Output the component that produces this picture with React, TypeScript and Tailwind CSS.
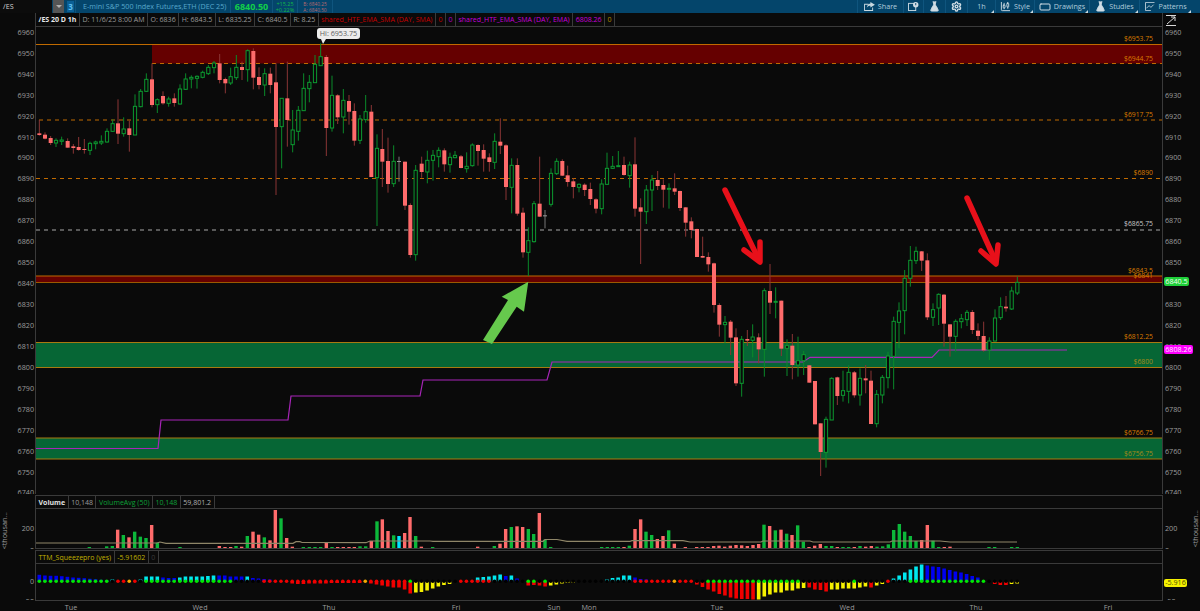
import { FlaskConical, Settings, RectangleHorizontal, CandlestickChart } from "lucide-react";

type Candle = [number, number, number, number, number, number];

// candles as [x, wickTop, bodyTop, bodyBottom, wickBottom, kind], kind 1 up, 0 down, 2 flat
// each block is traced at 3x, so x = offsetX + v/3 and y = offsetY + v/3
const candleBlocks: { ox: number; oy: number; rows: Candle[] }[] = [
  {
    ox: 0,
    oy: 30,
    rows: [
      [118, 270, 310, 315, 317, 0], [135, 307, 314, 326, 328, 0], [152, 318, 324, 339, 345, 0], [168, 325, 331, 339, 351, 1],
      [185, 320, 330, 334, 345, 1], [203, 325, 333, 353, 353, 0], [220, 342, 349, 354, 371, 0], [236, 321, 351, 360, 362, 0],
      [253, 327, 357, 360, 371, 0], [270, 335, 340, 361, 375, 1], [287, 332, 336, 341, 358, 1], [304, 316, 334, 339, 345, 1],
      [321, 295, 304, 336, 338, 1], [338, 268, 281, 304, 306, 1], [354, 208, 280, 311, 342, 0], [371, 262, 297, 311, 320, 1],
      [388, 272, 295, 315, 365, 0], [405, 193, 229, 315, 315, 1], [422, 177, 184, 230, 232, 1], [439, 130, 148, 184, 186, 1],
      [456, 100, 148, 225, 232, 0], [472, 205, 209, 224, 249, 1], [489, 184, 198, 220, 224, 0], [506, 200, 207, 220, 230, 1],
      [523, 190, 205, 219, 230, 0], [540, 163, 177, 222, 224, 1], [557, 130, 147, 178, 180, 1], [574, 136, 142, 147, 175, 1],
      [591, 136, 139, 145, 176, 1], [608, 122, 127, 142, 145, 1], [625, 105, 112, 131, 135, 1], [642, 93, 99, 113, 130, 1],
      [659, 72, 100, 150, 160, 0], [676, 143, 147, 160, 190, 0], [692, 113, 140, 159, 165, 1], [709, 75, 112, 143, 150, 1],
      [726, 95, 111, 120, 150, 0], [743, 58, 62, 119, 155, 1], [760, 55, 63, 143, 178, 0], [777, 112, 141, 165, 178, 0],
      [794, 115, 131, 165, 198, 1], [811, 113, 131, 165, 190, 0], [828, 100, 157, 291, 495, 0], [845, 205, 205, 290, 415, 1],
      [862, 95, 205, 270, 350, 0], [878, 240, 300, 344, 367, 1], [895, 228, 241, 304, 332, 1], [911, 130, 175, 242, 243, 1],
      [928, 135, 157, 176, 217, 1], [945, 75, 103, 158, 158, 1], [962, 40, 80, 107, 107, 1], [979, 75, 81, 294, 378, 0],
      [996, 137, 196, 294, 305, 1], [1013, 193, 196, 262, 282, 0], [1030, 177, 211, 261, 310, 1], [1047, 195, 213, 245, 284, 0],
      [1063, 220, 243, 332, 347, 0], [1080, 255, 267, 331, 342, 1], [1097, 195, 245, 269, 278, 1], [1114, 225, 245, 441, 441, 0],
      [1131, 313, 355, 443, 588, 1], [1147, 297, 357, 395, 471, 0], [1164, 323, 393, 462, 488, 0], [1181, 346, 394, 461, 471, 1],
      [1197, 380, 393, 396, 455, 2],
    ],
  },
  {
    ox: 400,
    oy: 110,
    rows: [
      [15, 155, 155, 287, 300, 0], [31, 280, 285, 435, 443, 0], [47, 165, 181, 434, 452, 1], [65, 140, 161, 186, 203, 0],
      [82, 122, 151, 186, 220, 1], [99, 120, 136, 151, 212, 1], [116, 112, 121, 140, 172, 1], [133, 115, 121, 163, 185, 0],
      [150, 128, 142, 164, 188, 1], [165, 123, 136, 143, 145, 1], [183, 135, 139, 174, 175, 0], [200, 127, 169, 176, 188, 1],
      [217, 100, 105, 167, 170, 1], [234, 103, 105, 123, 167, 0], [251, 103, 120, 146, 185, 0], [268, 130, 142, 156, 185, 0],
      [284, 70, 94, 157, 177, 1], [301, 25, 95, 107, 132, 0], [318, 103, 106, 231, 270, 0], [335, 145, 166, 232, 310, 1],
      [352, 145, 165, 311, 317, 0], [369, 293, 308, 427, 443, 0], [385, 352, 392, 427, 498, 1], [402, 273, 281, 395, 398, 1],
      [419, 140, 281, 320, 320, 0], [435, 300, 316, 319, 355, 2], [453, 175, 190, 283, 290, 1], [470, 145, 154, 191, 195, 1],
      [487, 148, 153, 197, 198, 0], [503, 167, 196, 216, 230, 0], [520, 205, 214, 231, 265, 0], [537, 220, 223, 232, 247, 1],
      [554, 220, 224, 240, 258, 0], [571, 218, 237, 267, 285, 0], [588, 265, 268, 296, 310, 0], [605, 208, 222, 296, 313, 1],
      [621, 128, 175, 223, 225, 1], [638, 138, 169, 175, 177, 1], [655, 123, 167, 170, 170, 1], [672, 140, 165, 195, 197, 0],
      [689, 155, 165, 197, 233, 1], [705, 82, 163, 296, 320, 0], [722, 265, 292, 305, 462, 0], [739, 225, 240, 305, 342, 1],
      [756, 195, 210, 240, 303, 1], [773, 183, 210, 228, 240, 0], [790, 208, 225, 239, 293, 0], [807, 220, 235, 238, 296, 1],
      [824, 190, 235, 245, 255, 0], [840, 242, 243, 294, 303, 0], [857, 292, 292, 338, 380, 0], [874, 322, 334, 360, 385, 0],
      [891, 356, 357, 441, 441, 0], [908, 380, 438, 443, 443, 0], [925, 427, 441, 463, 485, 0],
    ],
  },
  {
    ox: 700,
    oy: 240,
    rows: [
      [42, 68, 70, 195, 218, 0], [58, 190, 195, 254, 290, 0], [75, 228, 247, 254, 310, 1], [92, 240, 245, 293, 345, 0],
      [108, 265, 292, 430, 438, 0], [125, 288, 298, 430, 470, 1], [142, 270, 297, 302, 318, 0], [158, 253, 291, 301, 352, 1],
      [176, 280, 292, 328, 370, 0], [193, 145, 152, 328, 410, 1], [210, 72, 153, 188, 222, 0], [227, 142, 184, 187, 235, 1],
      [244, 182, 182, 326, 348, 0], [261, 298, 317, 325, 408, 1], [277, 282, 317, 375, 418, 0], [294, 290, 362, 375, 410, 1],
      [311, 333, 344, 362, 405, 1], [328, 375, 376, 428, 428, 0], [345, 423, 423, 553, 553, 0], [362, 550, 550, 636, 708, 0],
      [378, 530, 538, 637, 683, 1], [395, 412, 415, 540, 540, 1], [412, 410, 412, 468, 495, 0], [429, 392, 452, 466, 485, 1],
      [446, 376, 397, 454, 490, 1], [463, 393, 397, 466, 473, 0], [480, 385, 415, 465, 497, 1], [497, 375, 415, 421, 460, 0],
      [513, 392, 422, 552, 552, 0], [530, 450, 463, 551, 562, 1], [547, 405, 412, 465, 490, 1], [564, 335, 348, 413, 445, 1],
      [581, 230, 244, 349, 448, 1], [597, 187, 213, 247, 325, 1], [614, 90, 115, 212, 283, 1], [631, 18, 61, 115, 140, 1],
      [648, 20, 34, 62, 72, 1], [665, 33, 34, 62, 93, 0], [682, 40, 61, 232, 240, 0], [699, 190, 209, 232, 258, 1],
      [716, 160, 163, 204, 255, 1], [732, 162, 164, 251, 320, 0], [750, 253, 253, 290, 350, 0], [767, 238, 244, 289, 335, 1],
      [784, 222, 236, 245, 265, 1], [801, 210, 217, 239, 258, 1], [817, 210, 216, 270, 282, 0], [834, 250, 272, 288, 300, 0],
      [851, 245, 288, 331, 335, 0], [868, 292, 303, 330, 360, 1], [885, 208, 234, 303, 305, 1], [902, 172, 200, 233, 240, 1],
      [918, 168, 200, 205, 215, 0], [935, 140, 153, 207, 210, 1], [952, 110, 127, 159, 165, 1],
    ],
  },
];

// volume bars as [x, top, g|r], traced at 3x like the candles, baseline y = 548
const volumeBlocks: { ox: number; rows: [number, number, string][] }[] = [
  {
    ox: 0,
    rows: [
      [268, 201, "g"], [320, 199, "g"], [337, 198, "g"], [353, 149, "r"], [370, 165, "g"], [387, 172, "r"], [404, 155, "g"], [421, 170, "g"],
      [438, 174, "g"], [455, 135, "r"], [472, 188, "g"], [540, 201, "g"], [658, 198, "r"], [675, 201, "r"], [692, 201, "r"], [708, 198, "g"],
      [725, 200, "r"], [742, 168, "g"], [759, 155, "r"], [776, 164, "r"], [793, 172, "g"], [810, 181, "r"], [826, 90, "r"], [843, 115, "g"],
      [860, 174, "r"], [877, 200, "r"], [910, 201, "g"], [928, 201, "g"], [945, 201, "g"], [962, 201, "g"], [979, 188, "r"], [996, 201, "g"],
      [1013, 201, "r"], [1030, 201, "r"], [1047, 201, "r"], [1063, 201, "r"], [1080, 199, "g"], [1097, 199, "g"], [1114, 183, "r"], [1131, 124, "g"],
      [1147, 118, "r"], [1164, 153, "r"], [1181, 166, "g"], [1197, 168, "c"],
    ],
  },
  {
    ox: 400,
    rows: [
      [14, 159, "r"], [30, 111, "r"], [47, 168, "g"], [64, 200, "r"], [98, 201, "g"], [233, 200, "r"], [283, 198, "g"], [300, 191, "r"],
      [317, 147, "r"], [334, 141, "g"], [351, 139, "r"], [368, 141, "r"], [385, 147, "g"], [401, 162, "g"], [418, 99, "r"], [435, 179, "g"],
      [452, 201, "g"], [605, 201, "g"], [622, 201, "g"], [638, 201, "g"], [655, 201, "g"], [672, 201, "r"], [688, 197, "g"], [705, 147, "r"],
      [722, 118, "r"], [738, 155, "g"], [755, 165, "g"], [772, 177, "r"], [789, 168, "r"], [806, 151, "g"], [823, 191, "r"], [856, 201, "r"],
      [890, 201, "r"], [907, 201, "r"], [924, 201, "r"], [941, 198, "r"], [957, 197, "r"], [974, 200, "r"], [991, 197, "r"], [1008, 195, "r"],
      [1025, 196, "r"], [1042, 198, "r"], [1059, 195, "r"], [1076, 192, "r"], [1092, 134, "g"], [1109, 138, "r"], [1126, 151, "g"], [1143, 149, "r"],
      [1160, 161, "g"], [1176, 165, "r"], [1193, 136, "g"],
    ],
  },
  {
    ox: 800,
    rows: [
      [10, 185, "g"], [27, 201, "r"], [44, 197, "r"], [61, 192, "r"], [78, 198, "g"], [95, 198, "g"], [112, 201, "r"], [129, 201, "g"],
      [146, 201, "g"], [163, 201, "r"], [180, 198, "g"], [197, 200, "r"], [214, 198, "r"], [231, 200, "g"], [248, 199, "g"], [265, 193, "g"],
      [281, 150, "g"], [298, 132, "g"], [314, 155, "g"], [331, 168, "g"], [348, 183, "g"], [365, 180, "r"], [382, 135, "r"], [399, 182, "g"],
      [416, 201, "g"], [433, 201, "r"], [450, 200, "r"], [567, 201, "g"], [584, 201, "g"], [635, 201, "g"], [652, 201, "g"],
    ],
  },
];

const volumeColors: Record<string, string> = { g: "#0cb83a", r: "#ff6b6b", c: "#00e5ff" };

const volumeAvg =
  "36,543 157,543 160,542 166,543.3 293,543.3 296,541.7 300,541.7 302,542.5 366,542.7 370,541 430,541 433,541.3 543,541.3 545,539.5 557,539.5 567,541.3 630,541.3 632,540.7 683,540.7 690,542 761,542 763,541 810,541 813,542 890,542 892,541 940,541 950,542 1017,542";

// squeeze histogram, one [color, px] per bar, x = 39.3 + 5.62 * i
const b = (h: number): [string, number] => ["#0000f0", h];
const c = (h: number): [string, number] => ["#00e8f0", h];
const r = (h: number): [string, number] => ["#f00000", h];
const y = (h: number): [string, number] => ["#f5f000", h];
const z = (): [string, number] => ["#000000", 0];

const squeeze: [string, number][] = [
  b(6.7), b(6), b(5.7), b(5.7), b(5.3), b(4.7), b(4), b(3.7), b(3.3), b(2.7), b(2.3), b(1.7), b(1.3), c(2), z(), z(), z(), z(),
  c(2), c(5), c(5), c(5), b(4), b(3.5), b(3.5), c(4), c(5), c(5), c(5), c(5), c(5.5), c(6), b(6), b(6), b(5), b(5), b(5), c(5),
  b(3.5), b(3), b(2.5), b(2), z(), z(), z(), r(-2), r(-2.5), r(-2.5), r(-2), r(-2), r(-2), r(-2), r(-1.5), r(-1.5), r(-1.5), r(-1.5),
  r(-1.5), r(-1.5), z(), r(-2), r(-3), r(-4), r(-5), r(-6), r(-6), r(-8), r(-12), y(-11), y(-10.5), y(-9), y(-7), y(-5), y(-3.5), y(-2.5),
  z(), z(), z(), z(), c(4), c(4.5), c(5), c(6), c(7), b(5.5), c(6), b(3), z(), r(-4), r(-3.5), r(-4), r(-5), y(-4), y(-3), y(-2),
  y(-1.5), y(-1), z(), z(), z(), z(), z(), c(2), c(3.5), c(4), c(6), c(6), b(4), b(2.5), b(2), z(), z(), z(), z(), z(), z(), z(), z(),
  r(-3), r(-5.5), r(-8), r(-10), r(-12.5), r(-14), r(-16), r(-17), r(-17.5), r(-17.5), r(-18), y(-18), y(-15), y(-13), y(-11), y(-11), y(-9),
  y(-9), y(-7), y(-6.5), r(-6), r(-8), r(-8.5), r(-10), y(-8), y(-8), y(-7), y(-7), y(-7), y(-6), y(-5), r(-6), y(-4), y(-2.5), z(), c(3),
  c(6), c(9), c(12), c(15), c(17), b(16), b(15), b(14.5), b(13), b(11.5), b(10), b(9), b(7.5), b(5.5), b(4), z(), z(), r(-2.5), r(-3.5),
  r(-3.5), y(-2.5), y(-2),
];

const G = "#00e800";
const R = "#f00000";
const O = "#f5a800";
const K = "#000000";

const repeat = (color: string, n: number) => Array.from({ length: n }, () => color);

const squeezeDots: string[] = [
  ...repeat(G, 13), K, R, R, O, R, K, ...repeat(G, 16), ...repeat(K, 5), ...repeat(R, 18), O, ...repeat(R, 7), G,
  ...repeat(K, 8), ...repeat(R, 6), ...repeat(K, 6), G, G, K, G, ...repeat(K, 15), ...repeat(R, 7), O, R, R, R, K, K, ...repeat(G, 17),
  ...repeat(K, 9), G, ...repeat(K, 5), R, K, K, K, ...repeat(G, 14), ...repeat(K, 6),
];

const priceLabels = [
  6960, 6950, 6940, 6930, 6920, 6910, 6900, 6890, 6880, 6870, 6860, 6850, 6840, 6830, 6820, 6810, 6800, 6790, 6780, 6770, 6760, 6750, 6740,
];

const zoneLabels: [string, number, string][] = [
  ["$6953.75", 38.5, "#d97a00"],
  ["$6944.75", 58, "#d97a00"],
  ["$6917.75", 114, "#d97a00"],
  ["$6890", 172, "#d97a00"],
  ["$6865.75", 223, "#c8c8c8"],
  ["$6843.5", 270, "#d97a00"],
  ["$6841", 275, "#d97a00"],
  ["$6812.25", 336, "#d97a00"],
  ["$6800", 361, "#a58a1a"],
  ["$6766.75", 432, "#d97a00"],
  ["$6756.75", 453, "#a58a1a"],
];

const timeLabels: [string, number][] = [
  ["Tue", 71], ["Wed", 200], ["Thu", 329], ["Fri", 456], ["Sun", 554], ["Mon", 589], ["Tue", 717], ["Wed", 847], ["Thu", 976], ["Fri", 1108],
];

function Candles() {
  return (
    <g>
      {candleBlocks.flatMap((block, bi) =>
        block.rows.map(([vx, wt, bt, bb, wb, kind], i) => {
          const x = block.ox + vx / 3;
          const top = block.oy + bt / 3;
          const h = Math.max((bb - bt) / 3, 1);
          const wick = kind === 1 ? "#0a8a2a" : kind === 0 ? "#8a3535" : "#777777";
          return (
            <g key={`${bi}-${i}`}>
              <line x1={x} x2={x} y1={block.oy + wt / 3} y2={block.oy + wb / 3} stroke={wick} strokeWidth="1" />
              {kind === 1 && <rect x={x - 1.6} y={top} width="3.2" height={h} fill="#0a0a0a" stroke="#0c9a30" strokeWidth="1" />}
              {kind === 0 && <rect x={x - 2} y={top} width="4" height={h} fill="#ff6b6b" />}
              {kind === 2 && <rect x={x - 2} y={top} width="4" height="1" fill="#999999" />}
            </g>
          );
        })
      )}
    </g>
  );
}

function MainChart() {
  return (
    <svg viewBox="36 27 1126 467" className="block h-[467px] w-[1126px]">
      <rect x="152" y="45" width="1010" height="18.5" fill="#650000" />
      <rect x="36" y="276" width="1126" height="6.5" fill="#650000" />
      <rect x="36" y="342.5" width="1126" height="25" fill="#066635" />
      <rect x="36" y="438" width="1126" height="21" fill="#066635" />

      <line x1="36" x2="1162" y1="44.5" y2="44.5" stroke="#c06a00" strokeWidth="1.2" />
      <line x1="152" x2="1162" y1="63.5" y2="63.5" stroke="#c06a00" strokeDasharray="4 4" />
      <line x1="39" x2="1162" y1="120" y2="120" stroke="#c06a00" strokeDasharray="4 4" />
      <line x1="36" x2="1162" y1="178.5" y2="178.5" stroke="#c06a00" strokeDasharray="4 4" />
      <line x1="36" x2="1162" y1="230" y2="230" stroke="#a8a8a8" strokeWidth="1.2" strokeDasharray="4 4" />
      <line x1="36" x2="1162" y1="276" y2="276" stroke="#c06a00" />
      <line x1="36" x2="1162" y1="282.5" y2="282.5" stroke="#9a5a00" />
      <line x1="36" x2="1162" y1="342.5" y2="342.5" stroke="#a87a10" />
      <line x1="36" x2="1162" y1="367.5" y2="367.5" stroke="#a87a10" />
      <line x1="36" x2="1162" y1="438" y2="438" stroke="#a87a10" />
      <line x1="36" x2="1162" y1="459" y2="459" stroke="#a87a10" />

      <polyline
        points="36,448.5 158,448.5 161,420 288,420 291,396 420,396 423,380 547,380 552,362 803,362 810,357.3 932,357.3 939,350 1067,350"
        fill="none"
        stroke="#a825b8"
        strokeWidth="1.2"
      />

      <Candles />

      {zoneLabels.map(([label, ly, fill]) => (
        <text key={label} x="1153" y={ly + 2.5} textAnchor="end" fill={fill} fontSize="6.8">
          {label}
        </text>
      ))}

      {/* green arrow */}
      <polygon points="528.3,281.7 501.7,296.7 508,300 483,340 492,344 516.7,306.7 524,311.7" fill="#66c94d" />
      {/* red arrows */}
      <g fill="none" stroke="#e8101a" strokeWidth="5.5" strokeLinecap="round" strokeLinejoin="round">
        <line x1="725" y1="190" x2="758" y2="258" />
        <polyline points="744,250 760,262 760,242" />
        <line x1="967" y1="198" x2="995" y2="260" />
        <polyline points="981,251 996,264 998,245" />
      </g>
    </svg>
  );
}

function VolumeChart() {
  return (
    <svg viewBox="36 509 1126 39" className="block h-[39px] w-[1126px]">
      {volumeBlocks.flatMap((block, bi) =>
        block.rows.map(([vx, top, color], i) => {
          const x = block.ox + vx / 3;
          const t = 480 + top / 3;
          return <rect key={`${bi}-${i}`} x={x - 1.7} y={t} width="3.4" height={548 - t} fill={volumeColors[color]} />;
        })
      )}
      <polyline points={volumeAvg} fill="none" stroke="#8f8668" strokeWidth="1.2" />
    </svg>
  );
}

function SqueezeChart() {
  return (
    <svg viewBox="36 564 1126 36" className="block h-[36px] w-[1126px]">
      {squeeze.map(([fill, h], i) => {
        const x = 39.3 + 5.62 * i;
        if (h === 0) return null;
        return <rect key={i} x={x - 1.8} y={h > 0 ? 581.5 - h : 581.5} width="3.6" height={Math.abs(h)} fill={fill} />;
      })}
      {squeezeDots.map((fill, i) => (
        <circle key={i} cx={39.3 + 5.62 * i} cy="581.3" r="1.8" fill={fill} />
      ))}
    </svg>
  );
}

function Corner() {
  return <span className="absolute bottom-0 right-[1px] h-0 w-0 border-b-[3px] border-l-[3px] border-b-[#c8d8e0] border-l-transparent" />;
}

function ToolItem({ icon, label, width, corner }: { icon?: React.ReactNode; label?: string; width: number; corner?: boolean }) {
  return (
    <div className="relative flex h-full items-center justify-center gap-[3px] border-l border-[#0f557e]" style={{ width }}>
      {icon}
      {label && <span>{label}</span>}
      {corner && <Corner />}
    </div>
  );
}

function TopBar() {
  return (
    <div className="flex h-[13px] w-[1200px] items-center overflow-hidden bg-[#04456b] text-[7.2px] leading-none">
      <div className="flex h-full w-[52px] items-center bg-[#0c0c0c] pl-[3px] text-[#d0d0d0]">/ES</div>
      <div className="ml-[1px] flex h-full w-[11px] items-center justify-center bg-[#555555]">
        <span className="h-0 w-0 border-x-[3px] border-t-[3px] border-x-transparent border-t-[#b0b0b0]" />
      </div>
      <div className="ml-[3px] flex h-[11px] w-[7px] items-center justify-center bg-[#0a5f95] text-[8px] font-bold text-[#5cc0f0]">3</div>
      <div className="ml-[1px] flex h-full w-[155px] items-center border-l border-[#0f557e] pl-[7px] text-[#58a8cc]">
        <span className="whitespace-nowrap">E-mini S&amp;P 500 Index Futures,ETH (DEC 25)</span>
      </div>
      <div className="flex h-full w-[42px] items-center justify-center border-l border-[#0f557e] text-[9px] font-bold text-[#12d048]">6840.50</div>
      <div className="flex h-full w-[25px] flex-col items-center justify-center border-l border-[#0f557e] text-[5.5px] leading-[6px] text-[#12b848]">
        <span>+15.25</span>
        <span>+0.22%</span>
      </div>
      <div className="flex h-full w-[36px] flex-col items-center justify-center border-x border-[#0f557e] text-[4.8px] leading-[6px] text-[#b86a70]">
        <span>B: 6840.25</span>
        <span>A: 6840.50</span>
      </div>

      <div className="ml-auto flex h-full items-center text-[#b0ccdc]">
        <ToolItem
          width={46}
          label="Share"
          icon={
            <svg viewBox="0 0 12 10" className="h-[9px] w-[11px]" fill="#c8d8e0">
              <path d="M0 2h5v1H1v6h8V6h1v4H0z" />
              <path d="M7 0l5 3-5 3V4.3C5 4.3 4 5 3 6.5 3.3 4 4.7 2 7 1.8z" />
            </svg>
          }
        />
        <ToolItem
          width={20}
          icon={
            <svg viewBox="0 0 12 10" className="h-[9px] w-[11px]">
              <rect x="0.5" y="1.5" width="8" height="8" fill="none" stroke="#d0dde5" />
              <circle cx="8.5" cy="3" r="3" fill="#d0dde5" />
              <path d="M8 1h1v2.5H8z" fill="#04456b" />
            </svg>
          }
        />
        <ToolItem width={22} icon={<FlaskConical size={11} color="#d0dde5" fill="#d0dde5" />} />
        <ToolItem width={22} icon={<Settings size={11} color="#d0dde5" strokeWidth={3} />} />
        <ToolItem width={28} corner label="1h" />
        <ToolItem width={39} corner label="Style" icon={<CandlestickChart size={11} color="#d0dde5" />} />
        <ToolItem width={55} corner label="Drawings" icon={<RectangleHorizontal size={12} color="#d0dde5" />} />
        <ToolItem width={50} corner label="Studies" icon={<FlaskConical size={11} color="#d0dde5" fill="#d0dde5" />} />
        <ToolItem
          width={53}
          corner
          label="Patterns"
          icon={
            <svg viewBox="0 0 11 10" className="h-[9px] w-[10px]" fill="none" stroke="#d0dde5" strokeWidth="0.9">
              <path d="M0.5 0.5h10M0.5 0.5v9h6" />
              <path d="M1.5 7l3-3 2 2 3-3" />
            </svg>
          }
        />
        <div className="w-[8px]" />
      </div>
    </div>
  );
}

function Cell({ color, bold, children }: { color: string; bold?: boolean; children: React.ReactNode }) {
  return (
    <div className={`flex h-full items-center whitespace-nowrap border-r border-[#3a3a3a] px-[2.5px] ${bold ? "font-bold" : ""}`} style={{ color }}>
      {children}
    </div>
  );
}

function PriceAxis({ align }: { align: "left" | "right" }) {
  return (
    <div className={`flex h-[481px] flex-col overflow-hidden pt-[9px] ${align === "left" ? "items-end pr-[1px]" : "items-start pl-[2px]"}`}>
      {priceLabels.map((p) => (
        <div key={p} className="flex h-[20.95px] shrink-0 items-center">
          {p}
        </div>
      ))}
    </div>
  );
}

function ThousandsLabel() {
  return <div className="rotate-180 whitespace-nowrap text-center [writing-mode:vertical-rl]">&lt;thousan...</div>;
}

export default function App() {
  return (
    <div className="h-[611px] w-[1200px] overflow-hidden bg-[#0a0a0a] font-['Open_Sans',sans-serif] text-[7.2px] leading-none text-[#9c9c9c]">
      <TopBar />

      {/* price pane */}
      <div className="flex h-[481px]">
        <div className="w-[35px] shrink-0">
          <PriceAxis align="left" />
        </div>
        <div className="relative w-[1128px] shrink-0 border-x border-[#3a3a3a]">
          <div className="flex h-[14px] items-center border-b border-[#3a3a3a] text-[7px]">
            <Cell color="#e8e8e8" bold>
              /ES 20 D 1h
            </Cell>
            <Cell color="#9c9c9c">D: 11/6/25 8:00 AM</Cell>
            <Cell color="#9c9c9c">O: 6836</Cell>
            <Cell color="#9c9c9c">H: 6843.5</Cell>
            <Cell color="#9c9c9c">L: 6835.25</Cell>
            <Cell color="#9c9c9c">C: 6840.5</Cell>
            <Cell color="#9c9c9c">R: 8.25</Cell>
            <Cell color="#c80000">shared_HTF_EMA_SMA (DAY, SMA)</Cell>
            <Cell color="#c00000">0</Cell>
            <Cell color="#b000c8">0</Cell>
            <Cell color="#c800d8">shared_HTF_EMA_SMA (DAY, EMA)</Cell>
            <Cell color="#c800d8">6808.26</Cell>
            <Cell color="#b08a00">0</Cell>
          </div>
          <MainChart />
          <div className="absolute left-[281px] top-[15px] flex h-[11px] w-[43px] items-center justify-center whitespace-nowrap rounded-[3px] bg-[#ececec] text-[#606060]">
            Hi: 6953.75
          </div>
          <div className="absolute left-[285px] top-[26px] h-0 w-0 border-l-[2px] border-r-[3px] border-t-[5px] border-l-transparent border-r-transparent border-t-[#ececec]" />
        </div>
        <div className="relative w-[37px] shrink-0">
          <PriceAxis align="right" />
          <svg viewBox="0 0 12 11" className="absolute left-[2px] top-[2px] h-[11px] w-[12px]" fill="none" stroke="#d8d8d8">
            <path d="M1 0.5h10M1 10.5h10M2 9l8-7M6 2h4v4" />
          </svg>
          <div className="absolute left-[1px] top-[264px] flex h-[9px] w-[25px] items-center justify-center rounded-[2px] bg-[#1fd03a] text-[#f0fff0]">6840.5</div>
          <div className="absolute left-[1px] top-[332px] flex h-[9px] w-[29px] items-center justify-center rounded-[2px] bg-[#ff00ff] text-[#ffe8ff]">6808.26</div>
        </div>
      </div>

      {/* volume pane */}
      <div className="mt-[1px] flex h-[54px]">
        <div className="flex w-[35px] shrink-0 overflow-hidden">
          <div className="pl-[1px] pt-[17px]">
            <ThousandsLabel />
          </div>
          <div className="ml-auto flex flex-col items-end pr-[1px] pt-[29.5px]">
            <span>200</span>
            <span className="mt-[15.5px]">0</span>
          </div>
        </div>
        <div className="w-[1128px] shrink-0 border-x border-y border-[#3a3a3a]">
          <div className="flex h-[13px] items-center border-b border-[#3a3a3a] text-[7px]">
            <Cell color="#e0e0e0" bold>
              Volume
            </Cell>
            <Cell color="#9c9c9c">10,148</Cell>
            <Cell color="#0ca038">VolumeAvg (50)</Cell>
            <Cell color="#0ca038">10,148</Cell>
            <Cell color="#b0b0b0">59,801.2</Cell>
          </div>
          <VolumeChart />
        </div>
        <div className="flex w-[37px] shrink-0 overflow-hidden">
          <div className="flex flex-col pl-[2px] pt-[29.5px]">
            <span>200</span>
            <span className="mt-[15.5px]">0</span>
          </div>
          <div className="ml-auto pr-[1px] pt-[15px]">
            <ThousandsLabel />
          </div>
        </div>
      </div>

      {/* squeeze pane */}
      <div className="mt-[1px] flex h-[50px]">
        <div className="flex w-[35px] shrink-0 flex-col items-end overflow-hidden pr-[1px] pt-[27.5px]">
          <span>0</span>
          <span className="mt-[13px]">-50</span>
        </div>
        <div className="h-[51px] w-[1128px] shrink-0 border-x border-y border-[#3a3a3a]">
          <div className="flex h-[13px] items-center border-b border-[#3a3a3a] text-[7px]">
            <Cell color="#c0b200">TTM_Squeezepro (yes)</Cell>
            <Cell color="#c0b200">-5.91602</Cell>
            <Cell color="#3a3a3a">0</Cell>
          </div>
          <SqueezeChart />
        </div>
        <div className="relative flex w-[37px] shrink-0 flex-col overflow-hidden pl-[2px] pt-[48px]">
          <span>-50</span>
          <div className="absolute left-[1px] top-[29px] flex h-[8px] w-[23px] items-center justify-center rounded-[2px] bg-[#f5f000] text-[#505000]">
            -5.916
          </div>
        </div>
      </div>

      {/* time axis */}
      <svg viewBox="0 600 1200 11" className="block h-[11px] w-[1200px]">
        {timeLabels.map(([label, x]) => (
          <text key={`${label}-${x}`} x={x} y="609.5" textAnchor="middle" fill="#9c9c9c" fontSize="7.2">
            {label}
          </text>
        ))}
      </svg>
    </div>
  );
}
